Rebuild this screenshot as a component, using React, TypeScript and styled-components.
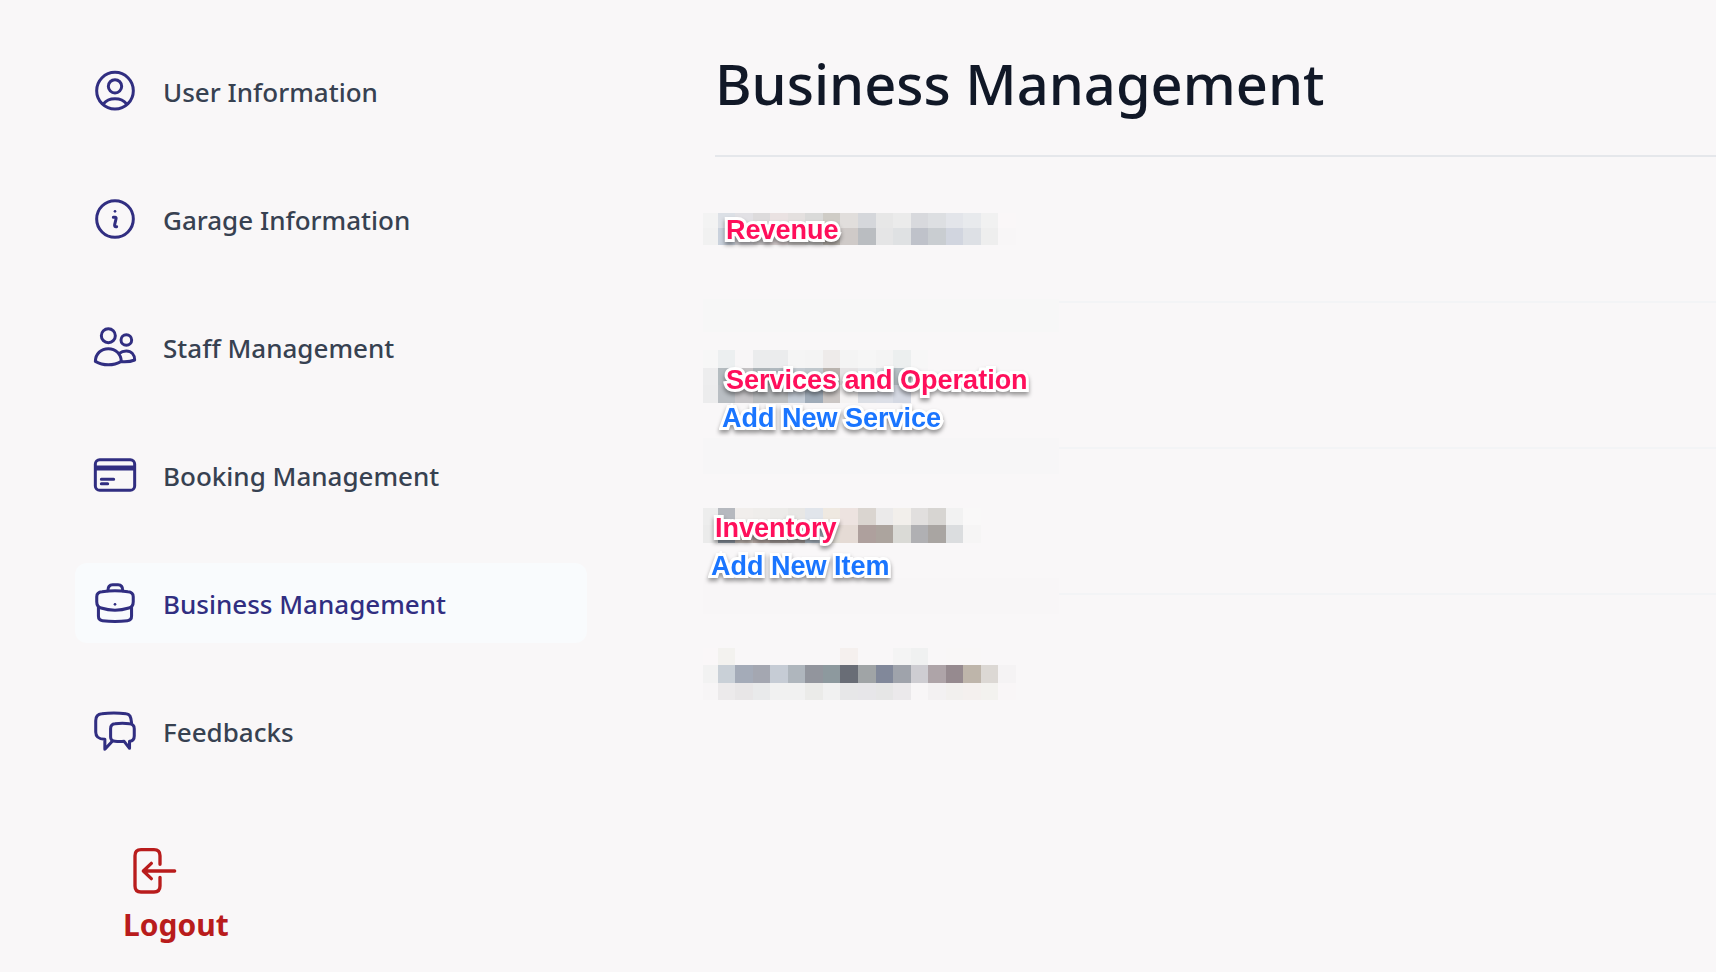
import React from 'react';
import styled, { createGlobalStyle } from 'styled-components';

const GlobalStyle = createGlobalStyle`
  *, *::before, *::after { box-sizing: border-box; }
  body {
    margin: 0;
    background: #f9f7f8;
    color: #374151;
    font-family: 'Segoe UI', 'Noto Sans', 'Open Sans', sans-serif;
  }
`;

const Page = styled.div`
  display: grid;
  grid-template-columns: minmax(420px, 512fr) minmax(0, 1001fr);
  column-gap: 128px;
  min-height: 100vh;
  padding-left: 75px;
  overflow: hidden;
`;

const Sidebar = styled.aside`
  display: flex;
  flex-direction: column;
  align-items: stretch;
  padding-top: 51px;
`;

const NavList = styled.nav`
  display: flex;
  flex-direction: column;
  gap: 48px;
`;

const NavItem = styled.a<{ $active?: boolean }>`
  display: flex;
  align-items: center;
  gap: 24px;
  height: 80px;
  padding: 0 16px;
  border-radius: 12px;
  background: ${(p) => (p.$active ? '#f9fbfd' : 'transparent')};
  color: ${(p) => (p.$active ? '#312e81' : '#374151')};
  font-size: 26px;
  font-weight: 500;
  line-height: 40px;
  text-decoration: none;
  white-space: nowrap;
`;

const NavLabel = styled.span`
  padding-top: 2px;
`;

const Icon = styled.svg`
  flex: none;
  width: 48px;
  height: 48px;
  fill: none;
  stroke: #312e81;
  stroke-width: 9;
  stroke-linecap: round;
  stroke-linejoin: round;
`;

const LogoutButton = styled.button`
  display: flex;
  flex-direction: column;
  align-items: flex-start;
  align-self: flex-start;
  gap: 8px;
  margin: 76px 0 0 48px;
  padding: 0;
  border: 0;
  background: none;
  color: #b91c1c;
  font: inherit;
  font-size: 30px;
  font-weight: 700;
  line-height: 44px;
  cursor: pointer;

  ${Icon} {
    margin-left: 8px;
    stroke: #b91c1c;
    stroke-width: 10;
  }
`;

const Main = styled.main`
  min-width: 0;
`;

const Title = styled.h1`
  margin: 0;
  padding: 43px 0 32px;
  border-bottom: 2px solid #e5e7eb;
  color: #111827;
  font-size: 56px;
  font-weight: 500;
  line-height: 80px;
  white-space: nowrap;
`;

const Row = styled.section<{ $top: number; $indent: number }>`
  position: relative;
  display: flex;
  flex-direction: column;
  align-items: flex-start;
  min-height: 146px;
  padding: ${(p) => p.$top}px 0 0 ${(p) => p.$indent}px;
  border-bottom: 2px solid #f3f4f6;

  &:last-child { border-bottom: 0; }
`;

const Mosaic = styled.svg`
  position: absolute;
  top: 0;
  left: -12px;
  width: 356px;
  height: 176px;
  overflow: visible;
  pointer-events: none;
`;

const outlined = `
  position: relative;
  z-index: 1;
  margin: 0;
  font-family: 'Liberation Sans', Arial, sans-serif;
  font-size: 27px;
  font-weight: 700;
  line-height: 38px;
  white-space: nowrap;
  -webkit-text-stroke: 6px #fff;
  paint-order: stroke fill;
  stroke-linejoin: round;
  filter: drop-shadow(0 3px 2px rgba(0, 0, 0, 0.4));
`;

const SectionName = styled.h2`
  ${outlined}
  color: #ff0f5b;
`;

const AddLink = styled.a`
  ${outlined}
  margin-left: -4px;
  color: #1a75ff;
  text-decoration: none;
`;

const EDGES = [0, 15, 32, 50, 67, 85, 102, 120, 137, 155, 173, 190, 208, 225, 243, 260, 278, 295, 313];

type Band = { y: number; h: number; colors: string };
type Veil = { y: number; h: number; color: string };

function Pixels({ bands, veil }: { bands: Band[]; veil?: Veil }) {
  return (
    <Mosaic viewBox="0 0 356 176" shapeRendering="crispEdges" aria-hidden="true">
      {veil && <rect x={0} y={veil.y} width={356} height={veil.h} fill={veil.color} />}
      {bands.map((band) =>
        band.colors.split(' ').map((c, i) =>
          c === '-' ? null : (
            <rect
              key={`${band.y}-${i}`}
              x={EDGES[i]}
              y={band.y}
              width={EDGES[i + 1] - EDGES[i]}
              height={band.h}
              fill={`#${c}`}
            />
          ),
        ),
      )}
    </Mosaic>
  );
}

const revenue: Band[] = [
  { y: 56, h: 15, colors: 'f3f3f3 dce0e6 e2e1e5 dddbdc eae2e2 e4e0df dadad9 cfccc6 e1dedc d5d7db e7e7e7 ebebeb d8d9dd dddfe2 e3e5ea e8eaed f1f1f1 faf7f8' },
  { y: 71, h: 17, colors: 'f1f1f1 c9d1dc d6d5da d3d0d2 dcd3d4 d0cccb c9c8c7 b8b3ad cfcac8 babdc1 e5e5e6 dfe1e3 bfc2ca c9cdd1 d1d5df dde0e5 eeeeee f8f6f7' },
];

const services: Band[] = [
  { y: 47, h: 18, colors: 'f7f7f7 eceff0 f8f6f7 ebeced ebeced f5f5f5 f4f4f4 eeebea f4f4f4 f6f6f6 f4f4f4 ecefef f7f7f7' },
  { y: 65, h: 17, colors: 'ededee b4bcc0 c5c3c5 adb4b8 b0b9bf c5ccd2 c0c8cd b9b3ae e5e3e4 e8eaec d8dde0 b8c3c8 f6f5f6' },
  { y: 82, h: 18, colors: 'ececed b9bec3 c8c6c9 babdc0 bdbfc1 c5cdd7 9fabb8 cbc6c4 f5f3f3 dcdfe5 dcdfe7 d5d9e3 f8f6f7' },
];

const inventory: Band[] = [
  { y: 59, h: 17, colors: 'ededed b6b9bf f1eeec efedeb ecebe9 e8e7e5 e1e5eb efe9e1 ede3e0 dad5d0 ebeaea f2efeb e1dfde d7d5d2 f2f2f2 f9f8f8' },
  { y: 76, h: 18, colors: 'ebebeb 8f99a5 c5bbb5 b8aaa5 a9a09d a19a98 adb9c5 e1ddd5 e5dbd5 aea09d aca49e dadad6 b0b0b3 a9a5a2 dbdddf f6f5f5' },
];

const unnamed: Band[] = [
  { y: 53, h: 17, colors: 'faf7f8 f3f2ef - - - - - - f5f0ee - - f4f4f4 f0f1f1 - f9f7f7 f9f7f7' },
  { y: 70, h: 18, colors: 'f2f2f2 c9d0d7 a4abb8 a4a7b1 c6ccd5 afb6bd 92959d 8d999e 696d76 a0a4a6 81889a 9fa3ab cecdd2 aea4a8 968a8f beb5aa dcd8d4 f5f3f4' },
  { y: 88, h: 17, colors: 'f7f5f6 eceaeb e8e6e7 e9eaeb f1f1f1 f1f1f1 ebebe9 f1f1f1 e7e7e8 e7e6e9 e6e6e6 ebe9eb f8f6f7 f3f1f2 f2f0ee f4f0ee f3f2ef f9f6f7' },
];

const navItems = [
  {
    label: 'User Information',
    art: (
      <>
        <circle cx="72" cy="71" r="55" />
        <circle cx="72" cy="58" r="20" />
        <path d="M38 110C46 99 58 95 72 95s26 4 34 15" />
      </>
    ),
  },
  {
    label: 'Garage Information',
    art: (
      <>
        <circle cx="72" cy="72" r="55" />
        <circle cx="72" cy="49" r="4" fill="#312e81" stroke="none" />
        <path d="M67 67h5c3 0 4 2 3 5l-4 17c-1 5 1 7 6 6" />
      </>
    ),
  },
  {
    label: 'Staff Management',
    art: (
      <>
        <circle cx="52" cy="38" r="21" />
        <circle cx="106" cy="51" r="16" />
        <path d="M13 115C14 92 30 77 52 77s38 16 39 38c-24 14-54 14-78 0Z" />
        <path d="M85 91c6-5 13-7 21-7 15 0 25 11 25 27-12 5-25 6-39 5" />
      </>
    ),
  },
  {
    label: 'Booking Management',
    art: (
      <>
        <rect x="13" y="26" width="118" height="92" rx="13" />
        <path d="M14 51h116" strokeWidth="15" strokeLinecap="butt" />
        <path d="M31 85h37M31 98h19" />
      </>
    ),
  },
  {
    label: 'Business Management',
    active: true,
    art: (
      <g transform="translate(1 0) scale(1.014 1)">
        <path d="M49 35c0-12 5-18 14-18h16c9 0 14 6 14 18" />
        <path d="M32 38c25-4 51-4 76 0 12 1 16 6 16 15v15c0 11-3 16-13 19-28 9-54 9-82 0-10-3-13-8-13-19V53c0-9 4-14 16-15Z" />
        <path d="M21 85v27c0 9 4 12 12 13 25 3 49 3 74 0 8-1 12-4 12-13V85" />
        <circle cx="70" cy="76" r="4" fill="#312e81" stroke="none" />
      </g>
    ),
  },
  {
    label: 'Feedbacks',
    art: (
      <g transform="translate(1 0) scale(1.014 1)">
        <path d="M119 47c-2-19-5-26-16-27-25-3-48-3-72 0-13 1-18 8-18 21v34c0 14 7 21 27 22v30l22-24" />
        <path d="M70 50c15-2 29-2 43 0 11 1 14 6 14 15v22c0 11-4 15-14 16v21l-16-21c-9 1-18 1-27 0-10-1-13-5-13-13V65c0-9 3-14 13-15Z" />
      </g>
    ),
  },
];

export default function App() {
  return (
    <>
      <GlobalStyle />
      <Page>
        <Sidebar>
          <NavList aria-label="Account">
            {navItems.map((item) => (
              <NavItem
                key={item.label}
                href="#"
                $active={item.active}
                aria-current={item.active ? 'page' : undefined}
              >
                <Icon viewBox="0 0 144 144" aria-hidden="true">{item.art}</Icon>
                <NavLabel>{item.label}</NavLabel>
              </NavItem>
            ))}
          </NavList>
          <LogoutButton type="button">
            <Icon viewBox="0 0 144 144" aria-hidden="true">
              <path d="M87 52V26c0-12-6-18-18-18H30C18 8 12 14 12 26v91c0 12 6 18 18 18h39c12 0 18-6 18-18V91" />
              <path d="M131 72H37M61 49 37 72l24 23" />
            </Icon>
            Logout
          </LogoutButton>
        </Sidebar>
        <Main>
          <Title>Business Management</Title>
          <Row $top={54} $indent={11}>
            <Pixels bands={revenue} veil={{ y: 142, h: 33, color: '#f7f7f7' }} />
            <SectionName>Revenue</SectionName>
          </Row>
          <Row $top={58} $indent={11}>
            <Pixels bands={services} veil={{ y: 135, h: 36, color: '#f7f6f7' }} />
            <SectionName>Services and Operation</SectionName>
            <AddLink href="#">Add New Service</AddLink>
          </Row>
          <Row $top={60} $indent={0}>
            <Pixels bands={inventory} veil={{ y: 129, h: 36, color: '#f8f6f7' }} />
            <SectionName>Inventory</SectionName>
            <AddLink href="#">Add New Item</AddLink>
          </Row>
          <Row $top={0} $indent={0}>
            <Pixels bands={unnamed} />
          </Row>
        </Main>
      </Page>
    </>
  );
}
